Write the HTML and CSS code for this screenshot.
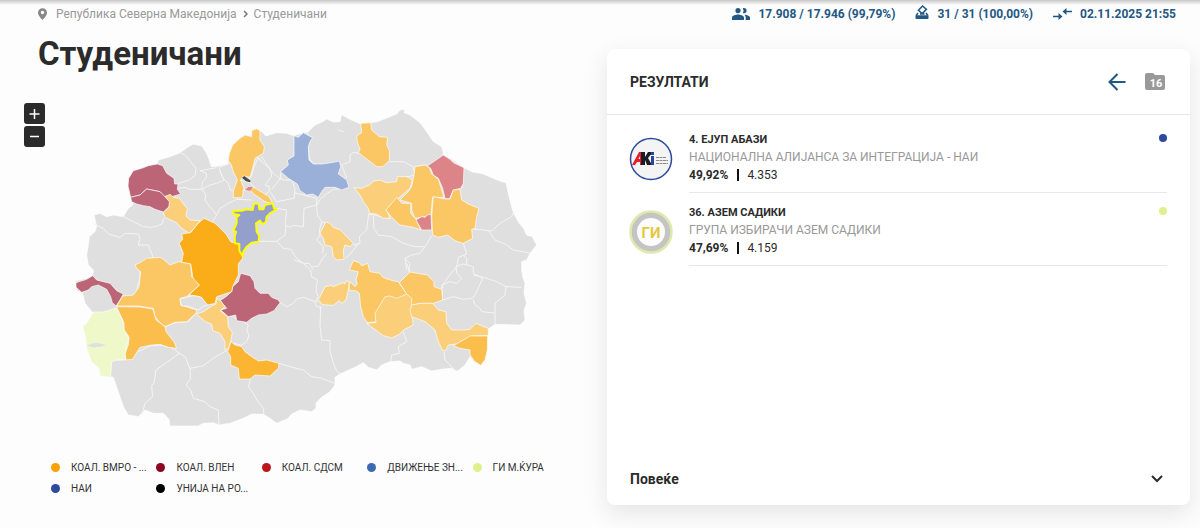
FILE: index.html
```html
<!DOCTYPE html>
<html lang="mk">
<head>
    <meta charset="UTF-8">
    <meta name="viewport" content="width=device-width, initial-scale=1.0">
    <title>Студеничани</title>
    <link rel="stylesheet" href="styles.css">
</head>
<body>
    <div class="page">
        <section class="left">
            <nav class="crumbs">
                <svg class="pin" viewBox="0 0 10 13"><path d="M5 0a5 5 0 0 0-5 5c0 3.400 5 8 5 8s5-4.600 5-8a5 5 0 0 0-5-5zm0 6.800a1.900 1.900 0 1 1 0-3.800 1.900 1.900 0 0 1 0 3.800z"/></svg>
                <a href="#">Република Северна Македонија</a>
                <svg class="sep" viewBox="0 0 5 8"><path d="M1 1l3 3-3 3"/></svg>
                <a href="#">Студеничани</a>
            </nav>
            <h1>Студеничани</h1>
            <div class="mapwrap">
                <div class="zoom">
                    <button type="button" aria-label="Зголеми"><svg viewBox="0 0 21 21"><path d="M5.500 11h10M10.500 6v10"/></svg></button>
                    <button type="button" aria-label="Намали"><svg viewBox="0 0 21 21"><path d="M6 10.500h9"/></svg></button>
                </div>
                <svg class="map" viewBox="0 0 1539 1005">
                    <path class="land" d="M72 345L90 340 110 350 130 345 160 350 175 325 190 313 180 292 173 260 178 232 190 212 215 205 235 197 262 190 265 180 300 170 330 158 355 140 370 132 395 138 410 160 418 180 424 200 445 198 475 192 473 175 478 160 488 135 510 115 525 105 545 110 545 92 560 86 568 90 575 95 588 108 620 98 650 100 672 107 700 98 712 98 735 75 758 65 770 57 790 66 810 65 815 44 840 58 872 72 900 68 922 65 940 58 980 42 990 30 1005 28 1002 38 1020 45 1050 68 1070 95 1090 125 1115 140 1120 158 1118 165 1145 178 1180 202 1205 215 1240 222 1270 235 1295 245 1308 248 1316 285 1325 320 1330 338 1345 365 1362 388 1370 405 1387 410 1400 435 1380 460 1370 480 1355 485 1355 510 1358 530 1365 550 1362 580 1370 610 1362 630 1365 660 1350 675 1275 673 1255 687 1253 710 1252 750 1245 780 1232 796 1210 783 1200 770 1185 795 1162 814 1145 805 1120 807 1085 813 1055 800 1025 808 1020 795 1000 790 990 783 960 785 935 795 920 810 895 802 880 788 855 802 810 822 795 832 795 855 780 875 755 892 738 908 738 925 725 935 690 930 665 942 655 955 620 970 600 955 580 943 545 942 520 955 480 970 447 975 430 968 400 970 385 978 300 978 297 958 280 940 250 940 225 930 205 950 175 945 160 920 145 875 130 832 90 828 85 805 65 785 50 750 45 705 38 678 50 670 70 640 45 610 38 580 20 572 17 542 50 535 68 527 70 510 55 495 50 465 55 435 58 410 75 395 80 380z"/>
                    <!-- northern borders -->
                    <g class="border">
                        <path d="M330 158L345 165 362 185 378 205 376 225 358 240 325 250M325 265L345 262 360 268 395 268 420 255 440 250 462 240 450 215 448 202 475 192M390 212L440 203M390 212L410 220 408 235 398 245 395 265 408 285 405 300 418 320 430 332 440 345 430 360 424 370M440 345L450 325 475 310 500 298 545 300"/>
                        <path d="M450 212L460 235 475 250 480 270 492 272M565 172L580 190 600 205 605 228 585 255 598 260 597 275 580 288 550 262M565 172L552 200 545 225 530 250M565 172L570 182M575 170L600 208 610 220 632 238 632 217"/>
                        <path d="M632 235L640 240 665 240 675 265 672 295 620 305 600 275M605 268L632 235M672 278L740 295M740 295L740 315 702 325 700 380 670 376 660 382 645 375 650 330 620 325M648 378L645 405 620 424 568 424 562 418M620 424L640 445 662 448 680 475 700 490 718 490 730 508"/>
                        <path d="M740 320L742 345 755 365 748 390 750 405 740 420 760 440 758 460M740 318L748 300 765 285 790 268 830 265M755 365L765 368M805 90L820 95M815 195L840 185 840 165 850 157 868 160M712 98L722 120 715 140 718 175 730 192 760 195M815 195L830 235M715 140L715 180"/>
                        <path d="M958 185L1000 185 1030 200 1035 225 1015 230 990 235M1035 200L1070 195M1170 265L1180 260M1210 387L1240 390 1265 393 1290 370 1325 350 1330 338M1255 390L1275 420 1305 432 1330 450 1360 455 1380 460M850 435L870 430 868 410 890 390 893 365 896 342 960 355M910 348L912 385 925 405 965 410 1000 430 1035 440 1065 440 1085 408M865 430L850 450 828 475M1065 440L1050 460 1025 465 1005 475 1010 510M1180 430L1190 462 1165 472 1160 500 1135 530 1115 560 1118 590"/>
                    </g>
                    <!-- western and southern borders -->
                    <g class="border">
                        <path d="M72 372L100 385 115 402 150 412 165 400 205 402 210 415 205 435 235 435 245 460 250 475M160 350L190 365 220 380 245 382 262 378 278 370 280 355M170 590L200 585 202 560 210 535 210 510 195 495M130 780L165 780M205 755L240 738 275 735 310 745 328 760 300 780 258 810 252 850 245 855 248 890 225 910 215 945M328 760L345 770 360 805 398 798 440 768 470 752M360 805L362 835 348 855 362 870 370 895 405 905 420 920 445 930 447 975"/>
                        <path d="M285 680L315 668 355 665 375 642M475 650L490 648 500 660 520 665M520 665L535 675 530 690 537 705 530 725 515 735 490 730M627 790L660 800 700 810 725 830 755 835 795 850M545 825L535 860 550 880 560 900 580 925 582 943M627 605L650 620 670 610 680 597 700 592 735 605 745 590M672 480L700 490 722 510 725 530 742 540 738 575 745 590M728 500L745 498 758 475 770 460M745 600L735 610 740 620 755 622M752 620L750 680 755 720 780 722 780 755 790 790 800 812 808 822"/>
                        <path d="M1010 490L1020 515M1005 475L1020 490 1015 515M1000 695L1005 710 1010 725 985 740 988 760 965 765 962 785M1035 650L1055 650M1122 755L1125 780 1135 790 1155 812M1120 565L1115 555 1140 545 1160 550 1175 535 1160 520 1158 500 1180 492 1210 500 1210 520 1238 535 1220 575 1208 595 1180 598 1150 590 1118 600M1210 525L1235 530 1280 545 1308 560 1355 562M1308 560L1305 585 1275 610 1275 640 1265 638 1235 635 1230 625 1215 615 1210 600M1275 640L1275 675M1180 465L1190 475 1190 495"/>
                    </g>
                    <!-- municipalities with a leading list -->
                    <path class="vlen" d="M262 192L278 197 290 220 312 235 314 252 324 252 322 268 332 282 305 290 298 286 282 290 270 275 230 267 210 285 182 292 174 258 176 235 190 212 215 205 235 197z"/>
                    <path class="vlen" d="M182 292L210 285 230 267 270 275 285 290 300 305 297 320 280 336 255 328 240 320 220 317 200 312 185 305z"/>
                    <path class="vlen" d="M18 548L50 538 68 527 80 540 100 545 120 550 140 572 160 582 150 600 138 618 127 608 122 590 110 568 85 555 65 560 55 570 35 577 18 562z"/>
                    <path class="vlen" d="M512 520L540 527 552 545 555 565 570 580 595 580 605 592 625 600 630 608 612 632 590 642 565 645 545 655 530 667 500 662 497 645 475 650 452 630 470 625 450 602 468 590 485 575 488 560 505 545z"/>
                    <path class="vmro2" d="M545 92L560 86 570 92 570 120 583 140 580 160 555 175 548 205 540 232 520 228 512 240 528 258 520 270 517 293 490 293 490 272 502 240 490 215 483 192 475 182 478 160 488 135 510 115 525 105 545 110z"/>
                    <path class="vmro2" d="M535 266L552 262 597 290 609 312 585 305 553 283z"/>
                    <path class="land" d="M512 240L541 248 552 262 525 272z"/>
                    <path class="red small" d="M525 270L535 261 549 261 541 272z"/>
                    <path class="dark small" d="M516 233L523 228 542 242 540 247 528 244z"/>
                    <path class="vmro1" d="M285 290L300 283 310 292 328 295 345 318 352 325 348 348 360 360 390 362 372 385 358 400 335 385 320 368 285 352 280 338 297 322 298 305z"/>
                    <path class="vmro5" d="M335 402L362 398 385 370 402 355 435 370 468 402 482 425 505 432 515 460 518 475 505 492 505 525 488 560 485 575 440 590 435 610 412 615 390 590 360 585 352 590 388 555 370 540 362 492 335 487 340 460 328 430 338 418z"/>
                    <path class="vmro2" d="M195 495L215 485 230 475 270 472 280 478 300 495 325 485 362 492 365 530 388 555 350 590 330 595 332 615 380 630 378 640 350 665 315 667 285 680 270 668 255 650 250 625 205 618 140 618 158 588 190 585 207 562 212 515 200 505z"/>
                    <path class="land" d="M330 597L355 590 372 587 395 592 412 615 398 620 385 630 370 625 355 618 335 618z"/>
                    <path class="vmro3" d="M140 620L210 621 248 627 258 660 285 680 288 695 312 725 320 745 295 742 270 733 245 735 210 742 195 765 188 778 168 780 165 760 175 735 177 710 162 690 162 670z"/>
                    <path class="vmro1" d="M440 595L452 602 465 620 450 632 473 650 475 680 487 698 483 720 475 745 465 750 465 725 450 700 428 692 425 672 405 665 380 642 400 635 425 618 438 612z"/>
                    <path class="vmro4" d="M483 725L495 735 515 740 525 755 545 770 565 783 590 780 627 790 625 805 600 828 555 825 540 837 508 837 505 805 482 795 482 770 473 755z"/>
                    <path class="gi" d="M70 636L100 636 138 624 158 660 162 690 177 715 170 740 165 765 168 778 140 780 125 785 122 832 90 828 88 805 65 785 52 750 45 705 38 678 50 670z"/>
                    <path class="land small" d="M50 737Q65 728 85 729L107 735Q90 743 70 742z"/>
                    <path class="move" d="M672 107L685 112 700 98 728 113 720 125 715 140 717 180 730 192 755 192 790 187 808 183 812 200 805 222 830 240 837 262 815 270 795 262 765 262 755 275 745 292 728 282 710 285 690 272 682 252 655 235 632 215 655 195 652 180 672 168z"/>
                    <path class="vmro2" d="M872 70L902 68 905 90 928 110 953 112 950 135 958 150 958 182 938 200 920 200 865 158 870 148 862 125 860 108 875 98z"/>
                    <path class="vmro1" d="M852 263L875 265 898 255 912 243 930 240 950 248 980 245 982 230 1010 230 1027 240 1020 265 985 295 965 310 950 330 960 355 940 355 920 342 898 340 895 325 880 305 870 285z"/>
                    <path class="vmro2" d="M1035 200L1065 195 1078 203 1085 222 1105 238 1115 270 1122 292 1088 292 1085 320 1083 345 1065 350 1035 355 1025 330 1025 310 990 300 1015 275 1025 260 1032 225z"/>
                    <path class="vmro2" d="M980 292L995 310 1022 310 1022 340 1038 358 1052 390 1030 382 990 375 965 352 948 330 965 310z"/>
                    <path class="red" d="M1038 360L1055 350 1065 352 1072 345 1083 343 1085 390 1055 390z"/>
                    <path class="red" d="M1072 198L1120 165 1140 178 1150 188 1182 203 1180 250 1172 265 1150 270 1138 297 1125 295 1118 265 1105 235 1090 225 1082 205z"/>
                    <path class="vmro2" d="M1090 290L1125 297 1140 297 1150 270 1170 268 1175 300 1195 312 1227 325 1220 350 1215 385 1205 388 1208 415 1180 430 1155 422 1133 405 1105 412 1088 405 1085 350z"/>
                    <path class="vmro1" d="M768 365L780 370 790 382 812 390 830 410 850 430 840 440 825 435 820 450 822 478 800 480 790 470 785 440 765 435 760 415 750 400z"/>
                    <path class="vmro1" d="M765 560L785 556 790 560 818 548 825 552 828 542 838 545 835 570 828 600 815 610 808 602 790 616 758 614 745 600z"/>
                    <path class="vmro2" d="M850 482L868 488 875 497 893 490 900 515 930 520 938 532 968 542 985 545 1005 575 1018 582 1000 600 960 610 940 620 930 635 920 665 892 668 880 650 872 620 868 580 858 572 838 572 838 545 850 555 855 560 862 552 858 540 865 515 838 510z"/>
                    <path class="vmro2" d="M1020 516L1042 520 1072 525 1092 545 1092 560 1115 568 1118 600 1090 610 1048 610 1020 620 1025 600 1010 582 988 548z"/>
                    <path class="vmro1" d="M945 590L960 588 980 595 1010 582 1025 595 1025 640 1030 675 1000 690 990 702 965 714 940 707 890 670 918 668 915 640z"/>
                    <path class="vmro1" d="M1025 615L1050 610 1088 610 1105 630 1128 635 1130 670 1145 690 1165 690 1182 690 1200 688 1218 670 1255 685 1255 707 1205 708 1180 720 1160 732 1135 735 1128 750 1118 752 1105 725 1095 690 1065 665 1025 650 1020 630z"/>
                    <path class="vmro3" d="M1200 708L1253 708 1252 750 1245 780 1232 796 1215 785 1200 765 1200 750 1170 745 1150 737 1180 720z"/>
                    <path class="nai" d="M490 332L515 332 530 328 548 330 552 310 566 312 568 328 580 328 585 315 608 310 612 325 620 328 600 340 590 350 588 365 578 373 570 362 558 370 560 395 568 408 565 425 545 428 530 440 520 455 518 468 508 452 508 432 495 430 494 410 498 395 490 392 500 370 500 352 508 345 490 342z"/>
                </svg>
            </div>
            <ul class="legend">
                <li><i class="dot c-vmro"></i><span>КОАЛ. ВМРО - ...</span></li>
                <li><i class="dot c-vlen"></i><span>КОАЛ. ВЛЕН</span></li>
                <li><i class="dot c-sdsm"></i><span>КОАЛ. СДСМ</span></li>
                <li><i class="dot c-znam"></i><span>ДВИЖЕЊЕ ЗН...</span></li>
                <li><i class="dot c-gi"></i><span>ГИ М.ЌУРА</span></li>
                <li><i class="dot c-nai"></i><span>НАИ</span></li>
                <li><i class="dot c-roma"></i><span>УНИЈА НА РО...</span></li>
            </ul>
        </section>

        <section class="right">
            <div class="stats">
                <div class="stat">
                    <svg class="people" viewBox="0 0 18 12"><path d="M6 5.200A2.600 2.600 0 1 0 6 0a2.600 2.600 0 0 0 0 5.200zM12 5.200A2.600 2.600 0 1 0 12 0c-.5 0-.9.1-1.200.3a4.300 4.300 0 0 1 0 4.600c.3.2.7.3 1.200.3zM6 6.600c-2 0-6 1-6 3V12h12V9.600c0-2-4-3-6-3zM12.400 6.700c.8.7 1.300 1.600 1.300 2.900V12H18V9.600c0-1.700-3-2.700-5.600-2.900z"/></svg>
                    <span>17.908 / 17.946 (99,79%)</span>
                </div>
                <div class="stat">
                    <svg class="ballot" viewBox="0 0 14 15"><path class="ln" d="M7.600 1L11.400 4.400 7.200 8.600 3.400 5.200zM3 8L1.200 10.500M11 8l1.800 2.500M5 9h4.500"/><path d="M.5 10.200h13V13a1 1 0 0 1-1 1h-11a1 1 0 0 1-1-1z"/></svg>
                    <span>31 / 31 (100,00%)</span>
                </div>
                <div class="stat">
                    <svg class="swap" viewBox="0 0 19 12"><path class="ln" d="M0 8.500h8M19 3.500h-8"/><path d="M5.500 5l4 3.500-4 3.500zM13.500 0l-4 3.500 4 3.500z"/></svg>
                    <span>02.11.2025 21:55</span>
                </div>
            </div>
            <div class="card">
                <header class="cardhead">
                    <h2>РЕЗУЛТАТИ</h2>
                    <a href="#" class="back" aria-label="Назад"><svg viewBox="0 0 18 18"><path d="M17.500 9H1.500M9.500 1L1.500 9l8 8"/></svg></a>
                    <a href="#" class="folder" aria-label="Избирачки места">
                        <svg viewBox="0 0 20 17"><path d="M2 0h6l2 2h8a2 2 0 0 1 2 2v11a2 2 0 0 1-2 2H2a2 2 0 0 1-2-2V2a2 2 0 0 1 2-2z"/><text x="11" y="14">16</text></svg>
                    </a>
                </header>
                <ul class="results">
                    <li>
                        <svg class="avatar" viewBox="0 0 44 44">
                            <circle class="aki" cx="22" cy="22" r="20.500"/>
                            <path class="aki-red" d="M3 28L10 15h5v13h-4v-3H8l-2 3zM9.500 22H11v-3z"/>
                            <path class="aki-black" d="M12 15h4v5l3-5h5l-5 6 4 7h-5l-2-5v5h-4z"/>
                            <path class="aki-blue" d="M22 19h3v9h-3zM22 15h3v3h-3z"/>
                            <path class="aki-lines" d="M27 20.500h10M27 23.500h12M27 26.500h12"/>
                        </svg>
                        <div class="info">
                            <h3>4. ЕЈУП АБАЗИ</h3>
                            <p class="party">НАЦИОНАЛНА АЛИЈАНСА ЗА ИНТЕГРАЦИЈА - НАИ</p>
                            <p class="votes"><b>49,92%</b><span>4.353</span></p>
                            <i class="dot c-nai"></i>
                        </div>
                    </li>
                    <li>
                        <svg class="avatar" viewBox="0 0 44 44">
                            <circle class="gi-ring" cx="22" cy="22" r="20.500"/>
                            <circle class="gi-core" cx="22" cy="22" r="14"/>
                            <text class="gi-text" x="22" y="28">ГИ</text>
                        </svg>
                        <div class="info">
                            <h3>36. АЗЕМ САДИКИ</h3>
                            <p class="party">ГРУПА ИЗБИРАЧИ АЗЕМ САДИКИ</p>
                            <p class="votes"><b>47,69%</b><span>4.159</span></p>
                            <i class="dot c-gi"></i>
                        </div>
                    </li>
                </ul>
                <button type="button" class="more">Повеќе<svg viewBox="0 0 12 8"><path d="M1 1l5 5 5-5"/></svg></button>
            </div>
        </section>
    </div>
</body>
</html>
```
FILE: styles.css
```css
*{
    box-sizing: border-box;
}
body{
    margin: 0;
    background: #fdfdfd linear-gradient(#c8c8c8, #fdfdfd) no-repeat 0 0 / 100% 5px;
    font-family: Roboto, "Liberation Sans", sans-serif;
    color: #2b2b2b;
}
h1, h2, h3, p, ul{
    margin: 0;padding: 0;
}
ul{
    list-style: none;
}
a{
    color: inherit;
    text-decoration: none;
}
button{
    border: 0;
    font-family: inherit;
    cursor: pointer;
}
svg{
    display: block;
    flex: none;
}
.page{
    display: grid;
    grid-template-columns: 559fr 583fr;
    gap: 24px;
    min-height: 100vh;
    padding: 0 10px 23px 24px;
}

/* left side */
.crumbs{
    display: flex;
    align-items: center;
    height: 28px;
    padding-left: 14px;
    font-size: 12px;
    color: #999;
}
.pin{
    width: 9px;
    height: 12px;
    margin-right: 9px;
    fill: #888;
}
.sep{
    width: 5px;
    height: 8px;
    margin: 0 6px;
    fill: none;
    stroke: #777;
    stroke-width: 1.5;
}
h1{
    padding-left: 14px;
    font-size: 33px;
    line-height: 52px;
    font-weight: 700;
}
.mapwrap{
    display: flex;
    gap: 25px;
    padding-top: 20px;
}
.zoom{
    display: flex;
    flex-direction: column;
    gap: 2px;
    padding-top: 3px;
}
.zoom button{
    width: 21px;
    height: 21px;
    padding: 0;
    border-radius: 3px;
    background: #2b2b2b;
}
.zoom path{
    stroke: #fff;
    stroke-width: 1.5;
}
.map{
    flex: 1;
    min-width: 0;
    stroke: #fff;
    stroke-width: 2;
    stroke-linejoin: round;
}
.land{
    fill: #dfdfdf;
}
.map .small{
    stroke: none;
}
.border{
    fill: none;
    stroke: #f5f5f5;
    stroke-width: 3;
}
.vmro1{ fill: #fbcf79; }
.vmro2{ fill: #fbc765; }
.vmro3{ fill: #fbbd4c; }
.vmro4{ fill: #fbb533; }
.vmro5{ fill: #fbac19; }
.vlen{ fill: #bb6577; }
.red{ fill: #dd8488; }
.move{ fill: #9ab0d9; }
.gi{ fill: #eef8c8; }
.dark{ fill: #4d4d4d; }
.nai{
    fill: #949fcb;
    stroke: #ff0;
    stroke-width: 6;
}
.legend{
    display: grid;
    grid-template-columns: repeat(5, 1fr);
    padding: 22px 5px 0 27px;
    font-size: 10px;
    line-height: 21px;
    color: #333;
}
.legend li{
    display: flex;
    align-items: center;
    gap: 11px;
    white-space: nowrap;
}
.dot{
    flex: none;
    width: 8px;
    height: 8px;
    border-radius: 50%;
}
.legend .dot{
    width: 9px;
    height: 9px;
}
.c-vmro{ background: #f9a108; }
.c-vlen{ background: #8b0620; }
.c-sdsm{ background: #bd151c; }
.c-znam{ background: #3c6ab3; }
.c-gi{ background: #dff08c; }
.c-nai{ background: #2e4a9e; }
.c-roma{ background: #000; }

/* right side */
.right{
    display: flex;
    flex-direction: column;
}
.stats{
    display: flex;
    justify-content: flex-end;
    gap: 20px;
    height: 49px;
    padding-right: 14px;
    font-size: 12px;
    line-height: 28px;
    font-weight: 700;
    color: #235884;
    fill: #235884;
}
.stat{
    display: flex;
    align-items: center;
    gap: 8px;
    height: 28px;
    white-space: nowrap;
}
.people{
    width: 18px;
    height: 12px;
}
.ballot{
    width: 14px;
    height: 15px;
    margin-bottom: 4px;
}
.stat .ln{
    fill: none;
    stroke: #235884;
    stroke-width: 1.5;
}
.swap{
    width: 19px;
    height: 12px;
}
.card{
    flex: 1;
    display: flex;
    flex-direction: column;
    border-radius: 8px;
    background: #fff;
    box-shadow: 0 8px 24px rgba(0, 0, 0, 0.1);
}
.cardhead{
    display: flex;
    align-items: center;
    gap: 19px;
    height: 66px;
    padding: 0 25px 0 23px;
    border-bottom: 1px solid #e6e6e6;
}
.cardhead h2{
    flex: 1;
    font-size: 14px;
    font-weight: 700;
}
.back svg{
    width: 18px;
    height: 18px;
    fill: none;
    stroke: #235884;
    stroke-width: 2;
}
.folder svg{
    width: 20px;
    height: 17px;
    fill: #999;
}
.folder text{
    fill: #fff;
    font-size: 11px;
    font-weight: 700;
    text-anchor: middle;
}
.results{
    flex: 1;
    padding: 5px 23px 0 22px;
}
.results li{
    display: flex;
    gap: 16px;
    padding-top: 11px;
}
.avatar{
    width: 44px;
    height: 44px;
    margin-top: 6px;
}
.aki{
    fill: #f4f4f4;
    stroke: #2e4a9e;
    stroke-width: 1.5;
}
.aki-red{ fill: #e3202b; }
.aki-black{ fill: #1c1c24; }
.aki-blue{ fill: #2846a0; }
.aki-lines{
    stroke: #888;
    stroke-width: 1;
    stroke-dasharray: 3 .5;
}
.gi-ring{
    fill: #c4c4c4;
    stroke: #dfe8ad;
    stroke-width: 2.5;
}
.gi-core{
    fill: #fcfcfc;
}
.gi-text{
    fill: #e3c93c;
    font-size: 15px;
    font-weight: 700;
    text-anchor: middle;
}
.info{
    flex: 1;
    position: relative;
    padding-bottom: 8px;
    border-bottom: 1px solid #e6e9e9;
}
.info .dot{
    position: absolute;
    top: 3px;right: 0;
}
.info h3{
    font-size: 11px;
    line-height: 18px;
    font-weight: 700;
}
.info p{
    font-size: 12px;
    line-height: 17px;
}
.info .party{
    color: #999;
}
.info .votes{
    display: flex;
    align-items: center;
    line-height: 18px;
}
.votes b{
    font-weight: 700;
    margin-right: 9px;
}
.votes span{
    padding-left: 8px;
    border-left: 2px solid #111;
    line-height: 12px;
}
.more{
    display: flex;
    align-items: center;
    justify-content: space-between;
    height: 52px;
    padding: 0 27px 0 23px;
    border-radius: 8px;
    background: transparent;
    font-size: 14px;
    font-weight: 700;
    color: #2b2b2b;
}
.more svg{
    width: 12px;
    height: 8px;
    fill: none;
    stroke: #2b2b2b;
    stroke-width: 2;
}
```
